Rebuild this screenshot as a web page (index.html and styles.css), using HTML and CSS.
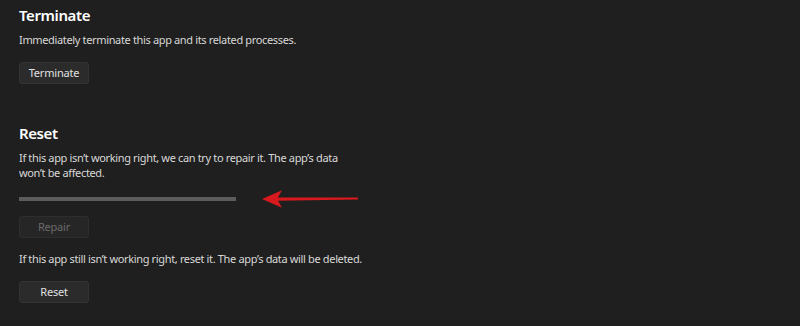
FILE: index.html
```html
<!DOCTYPE html>
<html>
<head>
<meta charset="utf-8">
<link rel="stylesheet" href="styles.css">
</head>
<body>
<div class="page">
  <section class="sec terminate">
    <h2 class="title">Terminate</h2>
    <p class="desc">Immediately terminate this app and its related processes.</p>
    <button class="btn">Terminate</button>
  </section>
  <section class="sec reset">
    <h2 class="title">Reset</h2>
    <p class="desc wrap">If this app isn’t working right, we can try to repair it. The app’s data won’t be affected.</p>
    <div class="progress-row">
      <div class="bar"></div>
      <svg class="arrow" width="100" height="20" viewBox="0 0 100 20">
        <path d="M16 8.6 L97 8.4 L97 10.4 L16 11.8 Z" fill="#d8191e"/>
        <path d="M1 10 L21 1.2 L16 10 L21 18.8 Z" fill="#d8191e"/>
      </svg>
    </div>
    <button class="btn disabled">Repair</button>
    <p class="desc second">If this app still isn’t working right, reset it. The app’s data will be deleted.</p>
    <button class="btn">Reset</button>
  </section>
</div>
</body>
</html>
```
FILE: styles.css
```css
html, body {
  margin: 0;
  padding: 0;
  background: #1f1f1f;
}
.page {
  width: 800px;
  height: 326px;
  box-sizing: border-box;
  padding: 4px 0 0 19px;
  font-family: "Noto Sans", "Open Sans", sans-serif;
  color: #e6e6e6;
  overflow: hidden;
}
.title {
  margin: 0;
  font-size: 15px;
  font-weight: 600;
  line-height: 22px;
  letter-spacing: -0.4px;
  color: #ffffff;
}
.desc {
  margin: 6px 0 0;
  font-size: 11px;
  line-height: 15px;
  letter-spacing: -0.35px;
  color: #d8d8d8;
}
.wrap {
  width: 340px;
}
.btn {
  display: block;
  width: 70px;
  height: 22px;
  margin-top: 15px;
  padding: 0;
  background: #2b2b2b;
  border: 1px solid #333333;
  border-radius: 3px;
  color: #e0e0e0;
  font-family: "Noto Sans", "Open Sans", sans-serif;
  font-size: 11px;
  line-height: 20px;
  letter-spacing: -0.2px;
}
.btn.disabled {
  background: #262626;
  border-color: #2e2e2e;
  color: #6a6a6a;
  margin-top: 7px;
}
.reset {
  margin-top: 38px;
}
.progress-row {
  display: flex;
  align-items: center;
  margin-top: 9px;
  height: 20px;
}
.bar {
  width: 217px;
  height: 4px;
  background: #5c5c5c;
}
.arrow {
  margin-left: 25px;
}
.second {
  margin-top: 13px;
  line-height: 16px;
}
.second + .btn {
  margin-top: 14px;
}
```
